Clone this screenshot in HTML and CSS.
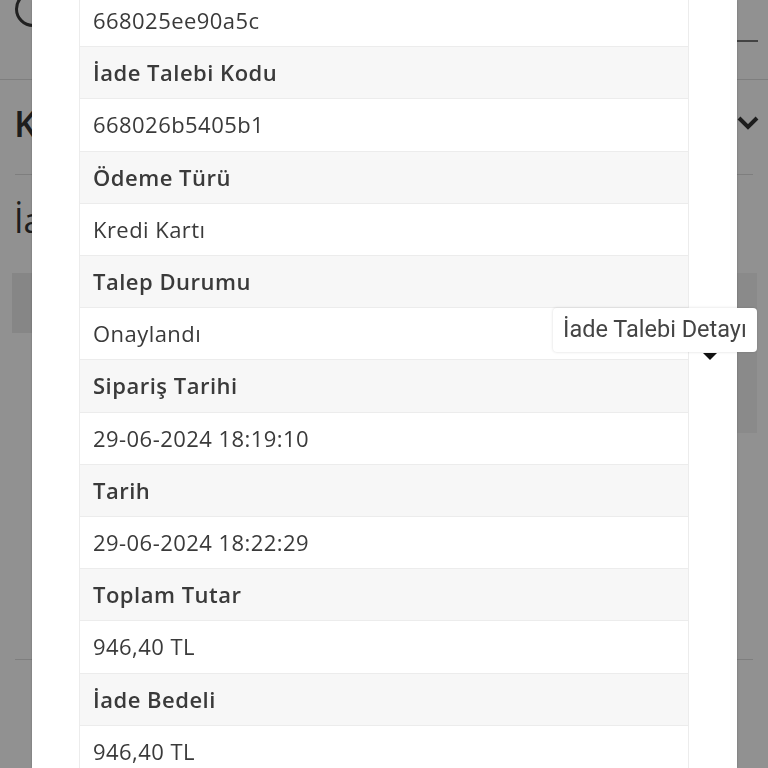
FILE: index.html
```html
<!DOCTYPE html>
<html lang="tr">
<head>
  <meta charset="UTF-8" />
  <title>İade Taleplerim</title>
  <link rel="stylesheet" href="styles.css">
</head>
<body>
  <div class="page">
    <header class="topbar">
      <span class="avatar"></span>
      <span class="menu-line"></span>
    </header>

    <div class="section-head">
      <h2>Kargo Takibi</h2>
      <svg class="chevron" width="24" height="16" viewBox="0 0 24 16">
        <path d="M3 3 L12 12 L21 3" fill="none" stroke="#333" stroke-width="4" />
      </svg>
    </div>
    <div class="divider"></div>

    <div class="section-body">
      <h3>İade Taleplerim</h3>
      <div class="request-row">
        <div class="thumb"></div>
        <div class="request-card"></div>
      </div>
    </div>
    <div class="divider bottom"></div>
  </div>

  <div class="overlay">
    <div class="modal">
      <table class="detail-table">
        <tr class="val"><td>668025ee90a5c</td></tr>
        <tr class="head"><td>İade Talebi Kodu</td></tr>
        <tr class="val"><td>668026b5405b1</td></tr>
        <tr class="head"><td>Ödeme Türü</td></tr>
        <tr class="val"><td>Kredi Kartı</td></tr>
        <tr class="head"><td>Talep Durumu</td></tr>
        <tr class="val"><td>Onaylandı</td></tr>
        <tr class="head"><td>Sipariş Tarihi</td></tr>
        <tr class="val"><td>29-06-2024 18:19:10</td></tr>
        <tr class="head"><td>Tarih</td></tr>
        <tr class="val"><td>29-06-2024 18:22:29</td></tr>
        <tr class="head"><td>Toplam Tutar</td></tr>
        <tr class="val"><td>946,40 TL</td></tr>
        <tr class="head"><td>İade Bedeli</td></tr>
        <tr class="val"><td>946,40 TL</td></tr>
      </table>
    </div>

    <div class="tooltip">
      İade Talebi Detayı
      <span class="tip-arrow"></span>
    </div>
  </div>
</body>
</html>
```

FILE: styles.css
```css
body {
  margin: 0;
  background: #fff;
  font-family: "Open Sans", "Liberation Sans", sans-serif;
  color: #333;
  overflow: hidden;
}

/* page behind the modal */
.topbar {
  height: 80px;
  border-bottom: 1px solid #ddd;
  box-sizing: border-box;
  display: flex;
  justify-content: space-between;
  align-items: flex-start;
}
.avatar {
  width: 30px;
  height: 30px;
  margin: -9px 0 0 15px;
  border: 3px solid #3a3a3a;
  border-radius: 50%;
}
.menu-line {
  width: 22px;
  height: 2px;
  margin: 40px 10px 0 0;
  background: #777;
}
.section-head {
  height: 94px;
  box-sizing: border-box;
  padding: 0 8px 8px 14px;
  display: flex;
  align-items: center;
  justify-content: space-between;
}
.section-head h2 {
  margin: 0;
  font-size: 36px;
  font-weight: 600;
  color: #333;
}
.chevron {
  display: block;
}
.divider {
  height: 1px;
  margin: 0 15px;
  background: #ddd;
}
.divider.bottom {
  margin-top: 226px;
}
.section-body {
  padding: 0 11px 0 12px;
}
.section-body h3 {
  margin: 22px 0 0 2px;
  font-size: 34px;
  font-weight: 500;
  line-height: 46px;
}
.request-row {
  margin-top: 30px;
  display: flex;
  align-items: flex-start;
}
.thumb {
  width: 60px;
  height: 60px;
  background: #ececec;
}
.request-card {
  flex: 1;
  height: 160px;
  background: #f3f3f3;
}

/* modal */
.overlay {
  position: fixed;
  inset: 0;
  background: rgba(0, 0, 0, 0.43);
}
.modal {
  position: absolute;
  top: 0;
  bottom: 0;
  left: 32px;
  right: 31px;
  background: #fff;
  box-shadow: 0 0 2px rgba(0, 0, 0, 0.25);
  overflow: hidden;
  padding: 0 48px 0 47px;
}
.detail-table {
  width: 100%;
  margin-top: -6px;
  border-collapse: collapse;
  border: 1px solid #ececec;
}
.detail-table td {
  padding: 11px 13px;
  font-size: 22px;
  line-height: 29.2px;
  letter-spacing: 0.45px;
  border-bottom: 1px solid #ececec;
  color: #3a3a3a;
}
.detail-table .head td {
  background: #f7f7f7;
  font-weight: 600;
  letter-spacing: 0.5px;
  color: #3a3a3a;
}

.tooltip {
  position: absolute;
  left: 553px;
  top: 308px;
  width: 204px;
  height: 44px;
  box-sizing: border-box;
  padding: 5px 10px;
  background: #fff;
  border-radius: 4px;
  box-shadow: 0 0 3px rgba(0, 0, 0, 0.15);
  font-family: Roboto, "Liberation Sans", sans-serif;
  font-size: 23.5px;
  line-height: 32px;
  color: #444;
  white-space: nowrap;
}
.tip-arrow {
  position: absolute;
  left: 150px;
  top: 45px;
  border-left: 7px solid transparent;
  border-right: 7px solid transparent;
  border-top: 7px solid #111;
}
```
